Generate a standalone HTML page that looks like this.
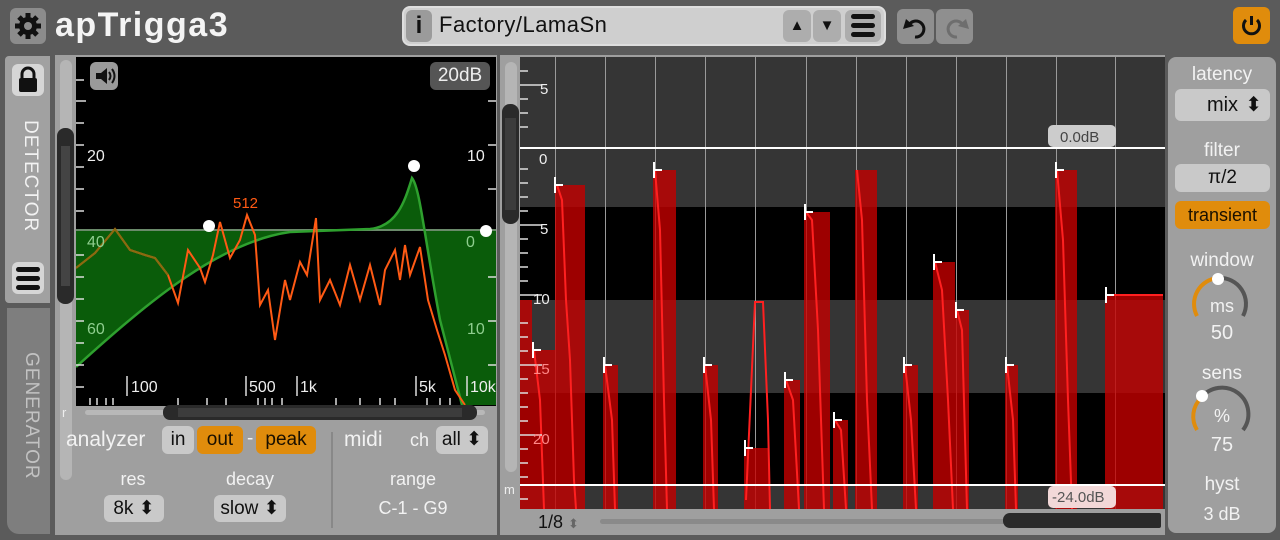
<!DOCTYPE html>
<html><head><meta charset="utf-8"><style>
*{margin:0;padding:0;box-sizing:border-box}
body{width:1280px;height:540px;background:#5b5b5b;font-family:"Liberation Sans",sans-serif;position:relative;overflow:hidden;color:#fff}
.a{position:absolute}
.btn{position:absolute;background:#c9c9c9;border-radius:6px;color:#111;text-align:center}
.or{background:#e08c0c;color:#1a1000}
.lbl{position:absolute;color:#f2f2f2;text-align:center}
</style></head><body>
<!-- top bar -->
<div class="a" style="left:10px;top:8px;width:36px;height:36px;background:#8c8c8c;border-radius:6px"></div>
<svg class="a" style="left:12px;top:10px" width="32" height="32" viewBox="0 0 32 32"><g fill="#111"><circle cx="16" cy="16" r="9"/><g stroke="#111" stroke-width="5"><line x1="16" y1="3" x2="16" y2="29"/><line x1="3" y1="16" x2="29" y2="16"/><line x1="7" y1="7" x2="25" y2="25"/><line x1="25" y1="7" x2="7" y2="25"/></g></g><circle cx="16" cy="16" r="4" fill="#8c8c8c"/></svg>
<div class="a" style="left:55px;top:6px;font-size:34px;font-weight:bold;color:#f4f4f4;letter-spacing:1.5px">apTrigga3</div>
<div class="a" style="left:402px;top:6px;width:484px;height:40px;background:#cfcfcf;border-radius:8px;border:2px solid #dedede"></div>
<div class="btn" style="left:406px;top:10px;width:26px;height:32px;background:#9b9b9b;font-weight:bold;font-size:24px;line-height:32px">i</div>
<div class="a" style="left:439px;top:12px;font-size:22px;color:#111;letter-spacing:0.5px">Factory/LamaSn</div>
<div class="btn" style="left:783px;top:10px;width:28px;height:32px;background:#adadad;font-size:15px;line-height:32px">▲</div>
<div class="btn" style="left:813px;top:10px;width:28px;height:32px;background:#adadad;font-size:15px;line-height:32px">▼</div>
<div class="btn" style="left:845px;top:10px;width:36px;height:32px;background:#adadad"></div>
<div class="a" style="left:851px;top:14px;width:24px;height:5px;background:#111;border-radius:3px"></div>
<div class="a" style="left:851px;top:23px;width:24px;height:5px;background:#111;border-radius:3px"></div>
<div class="a" style="left:851px;top:32px;width:24px;height:5px;background:#111;border-radius:3px"></div>
<div class="btn" style="left:897px;top:9px;width:37px;height:35px;background:#8f8f8f"></div>
<div class="btn" style="left:936px;top:9px;width:37px;height:35px;background:#8f8f8f"></div>
<svg class="a" style="left:897px;top:9px" width="76" height="35"><path d="M12 16 A8 8 0 1 1 18 28" stroke="#111" stroke-width="3" fill="none"/><path d="M6 20 L9 10 L17 17 Z" fill="#111"/><path d="M66 16 A8 8 0 1 0 60 28" stroke="#6e6e6e" stroke-width="3" fill="none"/><path d="M72 20 L69 10 L61 17 Z" fill="#6e6e6e"/></svg>
<div class="btn or" style="left:1233px;top:7px;width:37px;height:37px"></div>
<svg class="a" style="left:1237px;top:11px" width="29" height="29"><path d="M9 9 A8 8 0 1 0 20 9" stroke="#111" stroke-width="3" fill="none"/><line x1="14.5" y1="5" x2="14.5" y2="14" stroke="#111" stroke-width="3"/></svg>

<!-- left tabs -->
<div class="a" style="left:5px;top:56px;width:45px;height:247px;background:#a1a1a1;border-radius:4px 0 0 4px"></div>
<div class="a" style="left:7px;top:308px;width:43px;height:226px;background:#7e7e7e;border-radius:0 0 0 12px"></div>
<div class="btn" style="left:12px;top:64px;width:32px;height:32px;background:#d6d6d6"></div>
<svg class="a" style="left:16px;top:66px" width="24" height="28"><path d="M6 12 V8 A6 6 0 0 1 18 8 V12" stroke="#111" stroke-width="3" fill="none"/><rect x="3" y="12" width="18" height="14" rx="2" fill="#111"/></svg>
<div class="a" style="left:13px;top:120px;width:28px;font-size:19px;color:#f2f2f2;writing-mode:vertical-rl;letter-spacing:1px">DETECTOR</div>
<div class="btn" style="left:12px;top:262px;width:32px;height:32px;background:#d6d6d6"></div>
<div class="a" style="left:16px;top:267px;width:24px;height:5px;background:#111;border-radius:3px"></div>
<div class="a" style="left:16px;top:276px;width:24px;height:5px;background:#111;border-radius:3px"></div>
<div class="a" style="left:16px;top:285px;width:24px;height:5px;background:#111;border-radius:3px"></div>
<div class="a" style="left:14px;top:352px;width:28px;font-size:19px;color:#c2c2c2;writing-mode:vertical-rl;letter-spacing:1px">GENERATOR</div>

<!-- detector panel -->
<div class="a" style="left:55px;top:55px;width:442px;height:480px;background:#9f9f9f"></div>
<div class="a" style="left:60px;top:60px;width:12px;height:420px;background:#b5b5b5;border-radius:6px"></div>
<div class="a" style="left:57px;top:128px;width:17px;height:176px;background:#2a2a2a;border-radius:8px"></div>
<div class="a" style="left:61px;top:146px;width:9px;height:140px;background:#444"></div>
<svg class="a" style="left:76px;top:57px" width="420" height="349" viewBox="76 57 420 349">
<rect x="76" y="57" width="420" height="349" fill="#000"/>
<path d="M76,230 L76,367 C150,300 220,242 290,232 L370,229 C398,226 405,200 412,178 C420,188 424,235 440,320 L462,405 L496,405 L496,230 Z" fill="#0a5c0a"/>
<line x1="76" y1="230" x2="496" y2="230" stroke="#6a8a6a" stroke-width="2"/>
<path d="M76,367 C150,300 220,242 290,232 L370,229 C398,226 405,200 412,178 C420,188 424,235 440,320 L462,405" stroke="#2ea02e" stroke-width="2.5" fill="none"/>
<polyline points="76,268 95,253 115,229 130,250 145,255 155,258 168,275 178,303 188,250 200,268 205,282 213,255 220,222 230,258 240,240 247,215 255,235 260,305 268,290 275,340 285,280 290,300 300,262 307,275 316,218 320,300 330,280 340,305 350,265 360,300 370,265 380,305 385,270 395,250 400,280 405,245 410,275 420,247 428,300 437,330 445,355 455,390 465,405" stroke="#ff5a14" stroke-width="2" fill="none"/>
<polyline points="76,268 95,253 115,229 130,250 145,255 155,258 168,275" stroke="#8a6a10" stroke-width="2" fill="none"/>
<g fill="#fff"><circle cx="209" cy="226" r="6"/><circle cx="414" cy="166" r="6"/><circle cx="486" cy="231" r="6"/></g>
<g stroke="#ddd" stroke-width="1.5"><path d="M76,80h8M76,101h10M76,123h8M76,145h8M76,167h8M76,189h8M76,211h8M76,255h8M76,277h8M76,299h8M76,321h8M76,343h8M76,365h8M76,387h8M488,101h8M488,145h8M488,189h8M488,277h8M488,321h8M488,365h8"/>
<path d="M127,376v20M246,376v20M297,376v20M416,376v20M467,376v20M90,398v7M97,398v7M106,398v7M113,398v7M178,398v7M207,398v7M226,398v7M258,398v7M265,398v7M272,398v7M282,398v7M336,398v7M360,398v7M380,398v7M395,398v7M427,398v7M440,398v7M450,398v7"/></g>
<g fill="#eee" font-size="16" font-family="Liberation Sans"><text x="87" y="161">20</text><text x="467" y="161">10</text><text x="131" y="392">100</text><text x="249" y="392">500</text><text x="300" y="392">1k</text><text x="419" y="392">5k</text><text x="470" y="392">10k</text></g>
<g fill="#8fce8f" font-size="16" font-family="Liberation Sans"><text x="87" y="247">40</text><text x="87" y="334">60</text><text x="466" y="247">0</text><text x="467" y="334">10</text></g>
<text x="233" y="208" fill="#ff5a14" font-size="15" font-family="Liberation Sans">512</text>
</svg>
<div class="btn" style="left:90px;top:62px;width:28px;height:28px;background:#9a9a9a"></div>
<svg class="a" style="left:93px;top:65px" width="24" height="22"><path d="M3 8h5l6-5v16l-6-5H3z" fill="#111"/><path d="M16 7q3 4 0 8M19 4q5 7 0 14" stroke="#111" stroke-width="2" fill="none"/></svg>
<div class="btn" style="left:430px;top:62px;width:60px;height:28px;background:#555;color:#eee;font-size:19px;line-height:28px">20dB</div>
<div class="a" style="left:62px;top:405px;font-size:13px;color:#eee">r</div>
<div class="a" style="left:85px;top:410px;width:400px;height:5px;background:#b8b8b8;border-radius:3px"></div>
<div class="a" style="left:163px;top:405px;width:314px;height:15px;background:#2a2a2a;border-radius:7px"></div>
<div class="a" style="left:178px;top:408px;width:284px;height:9px;background:#3c3c3c"></div>
<div class="lbl" style="left:66px;top:428px;font-size:21px">analyzer</div>
<div class="btn" style="left:162px;top:426px;width:32px;height:28px;font-size:19px;line-height:28px">in</div>
<div class="btn or" style="left:197px;top:426px;width:46px;height:28px;font-size:19px;line-height:28px">out</div>
<div class="lbl" style="left:247px;top:428px;font-size:19px">-</div>
<div class="btn or" style="left:256px;top:426px;width:60px;height:28px;font-size:19px;line-height:28px">peak</div>
<div class="a" style="left:331px;top:432px;width:2px;height:96px;background:#888"></div>
<div class="lbl" style="left:344px;top:428px;font-size:21px">midi</div>
<div class="lbl" style="left:410px;top:430px;font-size:18px">ch</div>
<div class="btn" style="left:436px;top:426px;width:52px;height:28px;font-size:19px;line-height:28px">all ⬍</div>
<div class="lbl" style="left:103px;top:469px;width:60px;font-size:18px">res</div>
<div class="btn" style="left:104px;top:495px;width:60px;height:27px;font-size:19px;line-height:27px">8k ⬍</div>
<div class="lbl" style="left:210px;top:469px;width:80px;font-size:18px">decay</div>
<div class="btn" style="left:214px;top:495px;width:72px;height:27px;font-size:19px;line-height:27px">slow ⬍</div>
<div class="lbl" style="left:373px;top:469px;width:80px;font-size:18px">range</div>
<div class="lbl" style="left:363px;top:498px;width:100px;font-size:18px">C-1 - G9</div>

<!-- transient panel -->
<div class="a" style="left:500px;top:55px;width:665px;height:480px;background:#9f9f9f"></div>
<div class="a" style="left:505px;top:62px;width:12px;height:410px;background:#b5b5b5;border-radius:6px"></div>
<div class="a" style="left:502px;top:104px;width:17px;height:120px;background:#2a2a2a;border-radius:8px"></div>
<div class="a" style="left:505px;top:118px;width:11px;height:92px;background:#3c3c3c"></div>
<svg class="a" style="left:520px;top:57px" width="645" height="452" viewBox="520 57 645 452">
<rect x="520" y="57" width="645" height="452" fill="#353535"/>
<rect x="520" y="207" width="645" height="93" fill="#000"/>
<rect x="520" y="393" width="645" height="92" fill="#000"/>
<g stroke="#9a9a9a" stroke-width="1"><path d="M555.5,57v452M605.5,57v452M655.5,57v452M705.5,57v452M755.5,57v452M806.5,57v452M856.5,57v452M906.5,57v452M956.5,57v452M1006.5,57v452M1056.5,57v452M1115.5,57v452"/></g>
<g fill="#c40000" fill-opacity="0.8">
<rect x="520" y="300" width="12" height="209"/><rect x="532" y="350" width="23" height="159"/><rect x="555" y="185" width="30" height="324"/><rect x="603" y="365" width="15" height="144"/><rect x="653" y="170" width="23" height="339"/><rect x="703" y="365" width="15" height="144"/><rect x="744" y="448" width="25" height="61"/><rect x="784" y="380" width="16" height="129"/><rect x="804" y="212" width="26" height="297"/><rect x="833" y="420" width="15" height="89"/><rect x="855" y="170" width="22" height="339"/><rect x="903" y="365" width="15" height="144"/><rect x="933" y="262" width="22" height="247"/><rect x="955" y="310" width="14" height="199"/><rect x="1005" y="365" width="13" height="144"/><rect x="1055" y="170" width="22" height="339"/><rect x="1105" y="295" width="58" height="214"/></g>
<g stroke="#ff2020" stroke-width="2" fill="none">
<path d="M557,185 L562,200 L566,300 L570,360 L574,480 L576,509"/><path d="M534,350 L540,400 L544,509"/><path d="M655,170 L660,230 L664,400 L667,509"/><path d="M605,365 L612,420 L615,509"/><path d="M705,365 L711,420 L714,509"/><path d="M746,500 L755,302 L763,302 L768,420 L770,509"/><path d="M786,380 L793,400 L799,509"/><path d="M806,212 L812,220 L818,330 L824,509"/><path d="M835,420 L841,430 L846,509"/><path d="M857,170 L862,220 L867,400 L872,509"/><path d="M905,365 L911,420 L916,509"/><path d="M935,262 L942,290 L948,400 L953,509"/><path d="M957,310 L962,330 L967,509"/><path d="M1007,365 L1013,420 L1016,509"/><path d="M1057,170 L1063,240 L1068,400 L1072,509"/><path d="M1107,295 L1163,295"/></g>
<g stroke="#fff" stroke-width="2" fill="none"><path d="M555,177v16M555,185h8M654,162v16M654,170h8M604,357v16M604,365h8M704,357v16M704,365h8M745,440v16M745,448h8M785,372v16M785,380h8M805,204v16M805,212h8M834,412v16M834,420h8M904,357v16M904,365h8M934,254v16M934,262h8M956,302v16M956,310h8M1006,357v16M1006,365h8M1056,162v16M1056,170h8M1106,287v16M1106,295h8M533,342v16M533,350h8"/></g>
<line x1="520" y1="148" x2="1165" y2="148" stroke="#fff" stroke-width="2"/>
<line x1="520" y1="485" x2="1165" y2="485" stroke="#fff" stroke-width="2"/>
<g stroke="#ddd" stroke-width="1.5"><path d="M520,71h8M520,85h22M520,99h8M520,113h8M520,127h8M520,169h8M520,183h8M520,197h8M520,211h8M520,225h22M520,239h8M520,253h8M520,267h8M520,281h8M520,295h22M520,323h8M520,337h8M520,351h8M520,365h22M520,379h8M520,393h8M520,407h8M520,421h8M520,435h22M520,449h8M520,463h8M520,477h8M520,499h8"/></g>
<g fill="#eee" font-size="15" font-family="Liberation Sans"><text x="540" y="94">5</text><text x="539" y="164">0</text><text x="540" y="234">5</text><text x="533" y="304">10</text></g>
<g fill="#f88" font-size="15" font-family="Liberation Sans"><text x="533" y="374">15</text><text x="533" y="444">20</text></g>
<rect x="1048" y="125" width="68" height="22" rx="5" fill="#ccc"/><text x="1060" y="142" fill="#444" font-size="15" font-family="Liberation Sans">0.0dB</text>
<rect x="1048" y="486" width="68" height="22" rx="5" fill="#f2d8d8"/><text x="1052" y="502" fill="#555" font-size="15" font-family="Liberation Sans">-24.0dB</text>
</svg>
<div class="a" style="left:504px;top:482px;font-size:13px;color:#eee">m</div>
<div class="a" style="left:538px;top:512px;font-size:18px;color:#111">1/8 <span style="color:#666;font-size:13px">⬍</span></div>
<div class="a" style="left:600px;top:519px;width:560px;height:5px;background:#8a8a8a;border-radius:3px"></div>
<div class="a" style="left:1003px;top:513px;width:158px;height:15px;background:#2a2a2a;border-radius:7px 2px 2px 7px"></div>

<!-- right panel -->
<div class="a" style="left:1168px;top:57px;width:108px;height:476px;background:#9f9f9f;border-radius:8px"></div>
<div class="lbl" style="left:1168px;top:64px;width:108px;font-size:19px">latency</div>
<div class="btn" style="left:1175px;top:89px;width:95px;height:32px;font-size:20px;line-height:32px">mix <span style="position:absolute;right:8px">⬍</span></div>
<div class="lbl" style="left:1168px;top:140px;width:108px;font-size:19px">filter</div>
<div class="btn" style="left:1175px;top:164px;width:95px;height:28px;font-size:19px;line-height:28px">π/2</div>
<div class="btn or" style="left:1175px;top:201px;width:95px;height:28px;font-size:18px;line-height:28px">transient</div>
<div class="lbl" style="left:1168px;top:250px;width:108px;font-size:19px">window</div>
<svg class="a" style="left:1185px;top:268px" width="70" height="60"><path d="M12 48 A26 26 0 0 1 33 10" stroke="#e08c0c" stroke-width="4" fill="none"/><path d="M33 10 A26 26 0 0 1 58 48" stroke="#555" stroke-width="4" fill="none"/><circle cx="33" cy="11" r="6" fill="#fff"/></svg>
<div class="lbl" style="left:1168px;top:296px;width:108px;font-size:18px">ms</div>
<div class="lbl" style="left:1168px;top:322px;width:108px;font-size:20px">50</div>
<div class="lbl" style="left:1168px;top:363px;width:108px;font-size:19px">sens</div>
<svg class="a" style="left:1185px;top:382px" width="70" height="60"><path d="M12 48 A26 26 0 0 1 16 16" stroke="#e08c0c" stroke-width="4" fill="none"/><path d="M16 16 A26 26 0 0 1 58 48" stroke="#555" stroke-width="4" fill="none"/><circle cx="17" cy="14" r="6" fill="#fff"/></svg>
<div class="lbl" style="left:1168px;top:406px;width:108px;font-size:18px">%</div>
<div class="lbl" style="left:1168px;top:434px;width:108px;font-size:20px">75</div>
<div class="lbl" style="left:1168px;top:474px;width:108px;font-size:19px">hyst</div>
<div class="lbl" style="left:1168px;top:504px;width:108px;font-size:18px">3 dB</div>
</body></html>
